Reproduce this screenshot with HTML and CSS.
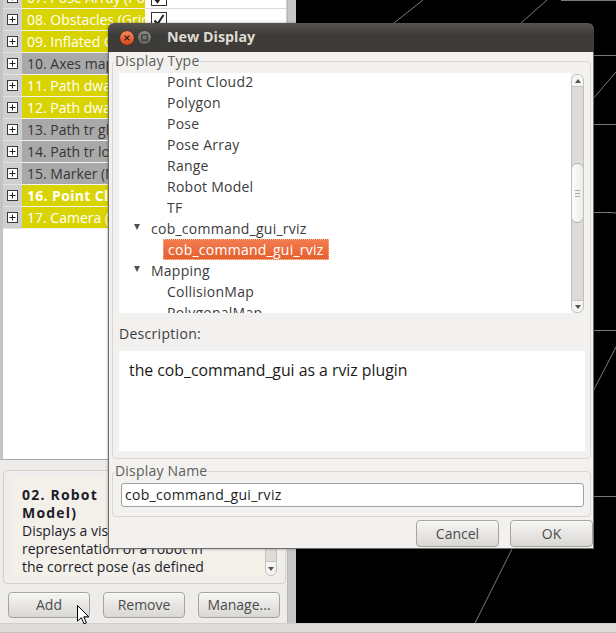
FILE: index.html
```html
<!DOCTYPE html>
<html>
<head>
<meta charset="utf-8">
<link rel="stylesheet" href="styles.css">
</head>
<body>
<div class="window">
  <div class="main">
    <div class="left">
      <div class="list">
        <div class="rows">
          <div class="row"><div class="exp"><svg class="plus" width="11" height="11" viewBox="0 0 11 11"><rect x="0.5" y="0.5" width="10" height="10" fill="#fff" stroke="#3a3a3a"/><path d="M2.5 5.5H8.5M5.5 2.5V8.5" stroke="#222" stroke-width="1"/></svg></div><div class="name y">07. Pose Array (PoseArray)</div><div class="chk"><svg class="cb" width="16" height="16" viewBox="0 0 16 16"><rect x="0.5" y="0.5" width="15" height="15" fill="#fff" stroke="#333"/><path d="M3.5 8.5L6.5 12L12.5 3" fill="none" stroke="#222" stroke-width="2"/></svg></div></div>
          <div class="row"><div class="exp"><svg class="plus" width="11" height="11" viewBox="0 0 11 11"><rect x="0.5" y="0.5" width="10" height="10" fill="#fff" stroke="#3a3a3a"/><path d="M2.5 5.5H8.5M5.5 2.5V8.5" stroke="#222" stroke-width="1"/></svg></div><div class="name y">08. Obstacles (GridCells)</div><div class="chk"><svg class="cb" width="16" height="16" viewBox="0 0 16 16"><rect x="0.5" y="0.5" width="15" height="15" fill="#fff" stroke="#333"/><path d="M3.5 8.5L6.5 12L12.5 3" fill="none" stroke="#222" stroke-width="2"/></svg></div></div>
          <div class="row"><div class="exp"><svg class="plus" width="11" height="11" viewBox="0 0 11 11"><rect x="0.5" y="0.5" width="10" height="10" fill="#fff" stroke="#3a3a3a"/><path d="M2.5 5.5H8.5M5.5 2.5V8.5" stroke="#222" stroke-width="1"/></svg></div><div class="name y">09. Inflated Obstacles (GridCells)</div><div class="chk"></div></div>
          <div class="row"><div class="exp"><svg class="plus" width="11" height="11" viewBox="0 0 11 11"><rect x="0.5" y="0.5" width="10" height="10" fill="#fff" stroke="#3a3a3a"/><path d="M2.5 5.5H8.5M5.5 2.5V8.5" stroke="#222" stroke-width="1"/></svg></div><div class="name g">10. Axes map (Axes)</div><div class="chk"></div></div>
          <div class="row"><div class="exp"><svg class="plus" width="11" height="11" viewBox="0 0 11 11"><rect x="0.5" y="0.5" width="10" height="10" fill="#fff" stroke="#3a3a3a"/><path d="M2.5 5.5H8.5M5.5 2.5V8.5" stroke="#222" stroke-width="1"/></svg></div><div class="name y">11. Path dwa global (Path)</div><div class="chk"></div></div>
          <div class="row"><div class="exp"><svg class="plus" width="11" height="11" viewBox="0 0 11 11"><rect x="0.5" y="0.5" width="10" height="10" fill="#fff" stroke="#3a3a3a"/><path d="M2.5 5.5H8.5M5.5 2.5V8.5" stroke="#222" stroke-width="1"/></svg></div><div class="name y">12. Path dwa local (Path)</div><div class="chk"></div></div>
          <div class="row"><div class="exp"><svg class="plus" width="11" height="11" viewBox="0 0 11 11"><rect x="0.5" y="0.5" width="10" height="10" fill="#fff" stroke="#3a3a3a"/><path d="M2.5 5.5H8.5M5.5 2.5V8.5" stroke="#222" stroke-width="1"/></svg></div><div class="name g">13. Path tr global (Path)</div><div class="chk"></div></div>
          <div class="row"><div class="exp"><svg class="plus" width="11" height="11" viewBox="0 0 11 11"><rect x="0.5" y="0.5" width="10" height="10" fill="#fff" stroke="#3a3a3a"/><path d="M2.5 5.5H8.5M5.5 2.5V8.5" stroke="#222" stroke-width="1"/></svg></div><div class="name g">14. Path tr local (Path)</div><div class="chk"></div></div>
          <div class="row"><div class="exp"><svg class="plus" width="11" height="11" viewBox="0 0 11 11"><rect x="0.5" y="0.5" width="10" height="10" fill="#fff" stroke="#3a3a3a"/><path d="M2.5 5.5H8.5M5.5 2.5V8.5" stroke="#222" stroke-width="1"/></svg></div><div class="name g">15. Marker (Marker)</div><div class="chk"></div></div>
          <div class="row"><div class="exp"><svg class="plus" width="11" height="11" viewBox="0 0 11 11"><rect x="0.5" y="0.5" width="10" height="10" fill="#fff" stroke="#3a3a3a"/><path d="M2.5 5.5H8.5M5.5 2.5V8.5" stroke="#222" stroke-width="1"/></svg></div><div class="name y bold">16. Point Cloud (PointCloud2)</div><div class="chk"></div></div>
          <div class="row"><div class="exp"><svg class="plus" width="11" height="11" viewBox="0 0 11 11"><rect x="0.5" y="0.5" width="10" height="10" fill="#fff" stroke="#3a3a3a"/><path d="M2.5 5.5H8.5M5.5 2.5V8.5" stroke="#222" stroke-width="1"/></svg></div><div class="name y">17. Camera (Camera)</div><div class="chk"></div></div>
        </div>
      </div>
      <div class="descframe">
        <div class="descbox">
          <div class="desctext"><b>02. Robot <span class="wide">Model (Robot</span></b><br><b>Model)</b><br>Displays a visual<br>representation of a robot in<br>the correct pose (as defined<br>by the current TF</div>
          <div class="ssb">
            <div class="ssb-track"></div>
            <div class="ssb-btn"><span class="tri-down"></span></div>
          </div>
        </div>
      </div>
      <div class="btnrow">
        <div class="btn">Add</div>
        <div class="btn">Remove</div>
        <div class="btn">Manage...</div>
      </div>
    </div>
    <div class="splitter"></div>
    <div class="viewport">
      <svg class="grid" width="320" height="623" viewBox="0 0 320 623">
        <g stroke="#7a7a7a" stroke-width="1" fill="none">
          <path d="M127 0L60 53"/>
          <path d="M251 0L200 45"/>
          <path d="M265 0.5H320"/>
          <path d="M280 55.5H320"/>
          <path d="M320 72L290 107"/>
          <path d="M280 124.5H320"/>
          <path d="M280 212.5H315L320 213"/>
          <path d="M280 330.5H320"/>
          <path d="M320 347L290 405"/>
          <path d="M280 496.5H320"/>
          <path d="M226 529L179 623"/>
        </g>
      </svg>
    </div>
  </div>
  <div class="status"></div>

  <div class="dialog">
    <div class="titlebar">
      <svg class="tb-close" width="16" height="16" viewBox="0 0 16 16">
        <defs><linearGradient id="og" x1="0" y1="0" x2="0" y2="1"><stop offset="0" stop-color="#f58a5e"/><stop offset="1" stop-color="#d8461c"/></linearGradient></defs>
        <circle cx="8" cy="8" r="7.4" fill="url(#og)" stroke="#4a2518" stroke-width="0.9"/>
        <path d="M5.6 5.6L10.4 10.4M10.4 5.6L5.6 10.4" stroke="#3b1a0c" stroke-width="1.3"/>
      </svg>
      <svg class="tb-max" width="15" height="15" viewBox="0 0 15 15">
        <defs><linearGradient id="gg" x1="0" y1="0" x2="0" y2="1"><stop offset="0" stop-color="#8d8c87"/><stop offset="1" stop-color="#65645f"/></linearGradient></defs>
        <circle cx="7.5" cy="7.5" r="7" fill="url(#gg)" stroke="#34332f" stroke-width="0.9"/>
        <rect x="4.8" y="4.8" width="5.4" height="5.4" fill="none" stroke="#33322e" stroke-width="1.1"/>
      </svg>
      <div class="tb-title">New Display</div>
    </div>
    <div class="dbody">
      <div class="group g1">
        <div class="gtitle">Display Type</div>
        <div class="treewrap">
          <div class="tree">
            <div class="tinner">
              <div class="ti l2">Point Cloud2</div>
              <div class="ti l2">Polygon</div>
              <div class="ti l2">Pose</div>
              <div class="ti l2">Pose Array</div>
              <div class="ti l2">Range</div>
              <div class="ti l2">Robot Model</div>
              <div class="ti l2">TF</div>
              <div class="ti l1"><span class="arrow"></span>cob_command_gui_rviz</div>
              <div class="ti l2"><span class="sel">cob_command_gui_rviz</span></div>
              <div class="ti l1"><span class="arrow"></span>Mapping</div>
              <div class="ti l2">CollisionMap</div>
              <div class="ti l2">PolygonalMap</div>
            </div>
          </div>
          <div class="vsb">
            <div class="sb-btn top"><span class="tri-up"></span></div>
            <div class="sb-track"><div class="thumb"><span class="grip"></span></div></div>
            <div class="sb-btn bottom"><span class="tri-down"></span></div>
          </div>
        </div>
        <div class="dlabel">Description:</div>
        <div class="dbox">the cob_command_gui as a rviz plugin</div>
      </div>
      <div class="group g2">
        <div class="gtitle">Display Name</div>
        <div class="input">cob_command_gui_rviz</div>
      </div>
      <div class="dbtns">
        <div class="btn dbtn">Cancel</div>
        <div class="btn dbtn">OK</div>
      </div>
    </div>
  </div>

  <svg class="cursor" width="13" height="20" viewBox="0 0 13 20">
    <path d="M0.5 0.5V16.2L4.3 12.6L7 18.8L9.4 17.8L6.8 11.8H11.8Z" fill="#fff" stroke="#000" stroke-width="1"/>
  </svg>
</div>
</body>
</html>
```

FILE: styles.css
```css
* { box-sizing: border-box; }

body {
  margin: 0;
  width: 616px;
  height: 633px;
  overflow: hidden;
  font-family: "Open Sans", "Noto Sans", sans-serif;
  font-size: 14px;
  background: #dddcd9;
}

.window {
  position: relative;
  width: 616px;
  height: 633px;
}

.main {
  display: flex;
  height: 623px;
}

/* ---------- left panel ---------- */
.left {
  width: 287px;
  display: flex;
  flex-direction: column;
  background: #edecea;
}

.list {
  height: 460px;
  background: #fff;
  border-left: 3px solid #c3c3c3;
  border-right: 1px solid #cfcfcf;
  border-bottom: 1px solid #a9a9a9;
  overflow: hidden;
}

.rows { margin-top: -13px; }

.row {
  display: flex;
  height: 22px;
}

.exp {
  width: 19px;
  background: #cfcfcf;
  display: flex;
  align-items: center;
  justify-content: center;
  border-bottom: 1px solid #e2e2e2;
}

.plus { display: block; }

.name {
  width: 123px;
  padding-left: 5px;
  line-height: 21px;
  white-space: nowrap;
  overflow: hidden;
  color: #fff;
  border-bottom: 1px solid #f2f2f2;
}
.name.y { background: #d9d400; }
.name.g { background: #a9a9a9; color: #363636; }
.name.bold { font-weight: bold; letter-spacing: 0.35px; }

.chk {
  flex: 1;
  display: flex;
  align-items: center;
  padding-left: 6px;
  border-bottom: 1px solid #d9d9d9;
}
.cb { display: block; }

.descframe {
  margin: 10px 0 0 3px;
  width: 283px;
  height: 114px;
  border: 1px solid #d3d1cd;
  border-radius: 4px;
  background: #efeeec;
  padding: 5px 8px 7px 8px;
}

.descbox {
  height: 100px;
  display: flex;
  background: #f3f0ea;
}

.desctext {
  width: 253px;
  padding: 10px 0 0 10px;
  line-height: 18px;
  color: #1c1c2a;
  white-space: nowrap;
  overflow: hidden;
}
.desctext b { letter-spacing: 1.2px; }
.desctext .wide { margin-left: 8px; }

.ssb {
  width: 12px;
  display: flex;
  flex-direction: column;
  border: 1px solid #c3c1bc;
  border-radius: 6px;
  background: #dedcd8;
  overflow: hidden;
}
.ssb-track { flex: 1; }
.ssb-btn {
  height: 14px;
  background: #f5f4f2;
  border-top: 1px solid #c3c1bc;
  display: flex;
  align-items: center;
  justify-content: center;
}

.btnrow {
  margin-top: 8px;
  padding-left: 8px;
  display: flex;
  gap: 13px;
}

.btn {
  width: 82px;
  height: 26px;
  border: 1px solid #a5a4a0;
  border-radius: 4px;
  background: linear-gradient(#f6f5f4, #d9d8d5);
  box-shadow: inset 0 1px 0 #fff;
  color: #4c4c4c;
  display: flex;
  align-items: center;
  justify-content: center;
  line-height: 1;
}

.splitter {
  width: 9px;
  background: #c8c7c5;
  border-left: 1px solid #b9b8b6;
}

.viewport {
  flex: 1;
  background: #000;
}
.grid { display: block; }

.status {
  height: 10px;
  background: #dcdbd8;
  border-top: 1px solid #cfcecb;
  border-bottom: 1px solid #c4c3c0;
}

/* ---------- dialog ---------- */
.dialog {
  position: absolute;
  left: 108px;
  top: 23px;
  width: 486px;
  height: 526px;
  display: flex;
  flex-direction: column;
  border-radius: 6px 6px 0 0;
  box-shadow: 0 0 2px 1px rgba(0, 0, 0, 0.18);
}

.titlebar {
  height: 29px;
  border-radius: 6px 6px 0 0;
  background: linear-gradient(#56554f, #3d3c38 40%, #3c3b37);
  display: flex;
  align-items: center;
  padding-left: 11px;
}
.tb-close { display: block; }
.tb-max { display: block; margin-left: 2px; }
.tb-title {
  margin-left: 15px;
  color: #dfdbd2;
  font-weight: bold;
  font-size: 14.3px;
  line-height: 1;
}

.dbody {
  flex: 1;
  background: #f2f1f0;
  border: 1px solid #6f6e6a;
  border-top: none;
  padding: 0 0 0 2px;
  display: flex;
  flex-direction: column;
}

.group {
  margin: 0 2px 0 1px;
  border: 1px solid #d9d7d3;
  border-radius: 4px;
  display: flex;
  flex-direction: column;
}
.g1 { margin-top: 9px; padding: 0 5px 7px 6px; }
.g2 { margin-top: 12px; padding: 0 6px 9px 8px; }

.gtitle {
  margin: -10px 0 0 -5px;
  align-self: flex-start;
  padding: 0 1px;
  background: #f2f1f0;
  line-height: 17px;
  color: #5f5e5a;
  letter-spacing: 0.2px;
}
.g2 .gtitle { margin-left: -7px; }

.treewrap {
  margin-top: 4px;
  display: flex;
}

.tree {
  width: 452px;
  height: 240px;
  background: #fff;
  overflow: hidden;
}
.tinner { margin-top: -2px; }

.ti {
  height: 21px;
  line-height: 21px;
  white-space: nowrap;
  color: #3c3c3c;
  display: flex;
  align-items: center;
  letter-spacing: 0.25px;
}
.ti.l2 { padding-left: 48px; }
.ti.l1 { padding-left: 15px; }

.arrow {
  width: 0;
  height: 0;
  border-left: 3.5px solid transparent;
  border-right: 3.5px solid transparent;
  border-top: 6px solid #505050;
  margin: -4px 11px 0 0;
}

.sel {
  margin-left: -4px;
  padding: 0 4px;
  line-height: 19px;
  background: linear-gradient(#f27c4f, #e5602f);
  color: #fff;
  border: 1px dotted #f8c3ab;
}

.vsb {
  width: 13px;
  height: 239px;
  margin-top: 1px;
  border: 1px solid #c2c0bb;
  border-radius: 6px;
  background: #dedcd8;
  display: flex;
  flex-direction: column;
  overflow: hidden;
}
.sb-btn {
  height: 12px;
  background: #f6f5f3;
  display: flex;
  align-items: center;
  justify-content: center;
}
.sb-btn.top { border-bottom: 1px solid #c6c4bf; }
.sb-btn.bottom { border-top: 1px solid #c6c4bf; }
.sb-track {
  flex: 1;
  padding-top: 76px;
}
.thumb {
  margin: 0 -1px;
  height: 60px;
  border: 1px solid #b3b1ac;
  border-radius: 6px;
  background: linear-gradient(90deg, #fdfdfc, #ecebe8);
  display: flex;
  align-items: center;
  justify-content: center;
}
.grip {
  width: 5px;
  height: 7px;
  background: repeating-linear-gradient(#a8a7a3 0 1px, transparent 1px 3px);
}

.tri-up {
  width: 0; height: 0;
  border-left: 3.5px solid transparent;
  border-right: 3.5px solid transparent;
  border-bottom: 4px solid #555;
}
.tri-down {
  width: 0; height: 0;
  border-left: 3.5px solid transparent;
  border-right: 3.5px solid transparent;
  border-top: 4px solid #555;
}

.dlabel {
  margin-top: 12px;
  line-height: 17px;
  color: #3c3c3c;
  letter-spacing: 0.3px;
}

.dbox {
  margin-top: 9px;
  height: 100px;
  background: #fff;
  padding: 10px 0 0 10px;
  font-size: 15.8px;
  line-height: 18px;
  color: #1a1a1a;
}

.input {
  margin-top: 4px;
  height: 24px;
  border: 1px solid #a3a19d;
  border-radius: 3px;
  background: #fff;
  padding-left: 3px;
  line-height: 22px;
  color: #1e1e1e;
  letter-spacing: 0.3px;
}

.dbtns {
  margin-top: 3px;
  display: flex;
  justify-content: flex-end;
  gap: 11px;
}
.dbtn { width: 83px; height: 27px; }

.cursor {
  position: absolute;
  left: 77px;
  top: 605px;
}
```
